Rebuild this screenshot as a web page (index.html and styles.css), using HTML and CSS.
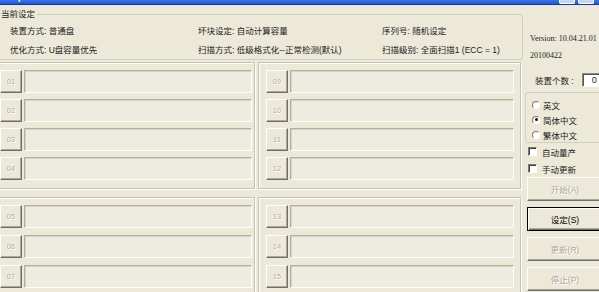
FILE: index.html
```html
<!DOCTYPE html>
<html>
<head>
    <meta charset="utf-8">
    <title>量产工具</title>
    <link rel="stylesheet" href="styles.css">
</head>
<body>
    <div class="titlebar">
        <span class="title">Chipsbank UMPTool</span>
        <span class="tb-btn"></span><span class="tb-btn"></span>
    </div>
    <div class="window">
        <div class="main">
            <fieldset class="current">
                <legend>当前设定</legend>
                <div class="info">
                    <span>装置方式: 普通盘</span>
                    <span>坏块设定: 自动计算容量</span>
                    <span>序列号: 随机设定</span>
                    <span>优化方式: U盘容量优先</span>
                    <span>扫描方式: 低级格式化--正常检测(默认)</span>
                    <span>扫描级别: 全面扫描1 (ECC = 1)</span>
                </div>
            </fieldset>
            <div class="frames">
                <div class="frame">
                    <div class="slot"><span class="port">01</span><span class="field"></span></div>
                    <div class="slot"><span class="port">02</span><span class="field"></span></div>
                    <div class="slot"><span class="port">03</span><span class="field"></span></div>
                    <div class="slot"><span class="port">04</span><span class="field"></span></div>
                </div>
                <div class="frame frame-r">
                    <div class="slot"><span class="port">09</span><span class="field"></span></div>
                    <div class="slot"><span class="port">10</span><span class="field"></span></div>
                    <div class="slot"><span class="port">11</span><span class="field"></span></div>
                    <div class="slot"><span class="port">12</span><span class="field"></span></div>
                </div>
                <div class="frame frame-low">
                    <div class="slot"><span class="port">05</span><span class="field"></span></div>
                    <div class="slot"><span class="port">06</span><span class="field"></span></div>
                    <div class="slot"><span class="port">07</span><span class="field"></span></div>
                </div>
                <div class="frame frame-r frame-low">
                    <div class="slot"><span class="port">13</span><span class="field"></span></div>
                    <div class="slot"><span class="port">14</span><span class="field"></span></div>
                    <div class="slot"><span class="port">15</span><span class="field"></span></div>
                </div>
            </div>
        </div>
        <div class="side">
            <div class="ver">Version: 10.04.21.01</div>
            <div class="date">20100422</div>
            <div class="count"><span>装置个数 :</span><span class="edit">0</span></div>
            <div class="lang">
                <div class="opt"><span class="radio"></span>英文</div>
                <div class="opt"><span class="radio on"></span>简体中文</div>
                <div class="opt"><span class="radio"></span>繁体中文</div>
            </div>
            <div class="chk"><span class="box"></span>自动量产</div>
            <div class="chk"><span class="box"></span>手动更新</div>
            <div class="btn off">开始(A)</div>
            <div class="btn def">设定(S)</div>
            <div class="btn off">更新(R)</div>
            <div class="btn off">停止(P)</div>
        </div>
    </div>
</body>
</html>
```

FILE: styles.css
```css
body {
    margin: 0;
    width: 599px;
    height: 292px;
    overflow: hidden;
    background: #ECE9D8;
    font-family: "Liberation Sans", "Noto Sans CJK SC", sans-serif;
    font-size: 8.5px;
    color: #1b1b1b;
}
.titlebar {
    box-sizing: border-box;
    height: 5px;
    display: flex;
    overflow: hidden;
    background: linear-gradient(#3a74ea, #1f57d6);
    border-bottom: 1px solid #0c3caa;
}
.title {
    flex: 1;
    color: #dfe8fb;
    font-weight: bold;
    font-size: 11px;
    line-height: 11px;
    margin-top: -9px;
}
.tb-btn {
    width: 14px;
    height: 3px;
    margin-right: 3px;
    border: 1px solid #fff;
    border-top: none;
    border-radius: 0 0 2px 2px;
    background: #c7d5f4;
}
.tb-btn:last-child {
    margin-right: 5px;
}
.window {
    display: flex;
}
.main {
    width: 531px;
    margin-left: -8px;
    flex-shrink: 0;
}
.current {
    margin: 3px 0 0 0;
    padding: 0 0 1px 17px;
    border: 1px solid #D0D0BF;
    border-radius: 3px;
    box-sizing: border-box;
    width: 531px;
}
.current legend {
    padding: 0 2px;
    margin-left: -11px;
    line-height: 12px;
}
.info {
    display: grid;
    grid-template-columns: 188px 184px auto;
    grid-auto-rows: 19px;
    align-items: center;
}
.frames {
    display: grid;
    grid-template-columns: 263px 263px;
    column-gap: 3px;
    row-gap: 8px;
    margin-top: 2px;
}
.frame {
    display: flex;
    flex-direction: column;
    gap: 6px;
    padding: 7px 2px 5px 7px;
    height: 113px;
    border: 1px solid #C6C3B3;
    box-shadow: inset 1px 1px 0 #fff, 1px 1px 0 #fff;
}
.frame-r {
    padding-right: 6px;
}
.frame-low {
    gap: 7px;
    height: 120px;
}
.slot {
    display: flex;
    gap: 2px;
    height: 23px;
}
.port {
    box-sizing: border-box;
    width: 22px;
    display: flex;
    align-items: center;
    justify-content: center;
    border: 1px solid;
    border-color: #fff #716F64 #716F64 #fff;
    box-shadow: inset -1px -1px 0 #ACA899;
    color: #B3B0A1;
    text-shadow: 1px 1px 0 #fff;
    font-size: 7.5px;
}
.field {
    flex: 1;
    border: 1px solid;
    border-color: #B2AF9F #fff #fff #B2AF9F;
    box-shadow: inset 1px 1px 0 #D6D3C4;
    background: #EEECE0;
}
.side {
    padding-left: 7px;
    display: flex;
    flex-direction: column;
    white-space: nowrap;
}
.ver, .date {
    font-family: "Liberation Serif", serif;
    font-size: 8px;
    line-height: 12px;
}
.ver {
    margin-top: 28px;
}
.date {
    margin-top: 5px;
}
.count {
    margin: 11px 0 0 5px;
    display: flex;
    align-items: center;
    height: 14px;
}
.edit {
    box-sizing: border-box;
    margin-left: 8px;
    width: 30px;
    height: 14px;
    line-height: 12px;
    padding-left: 9px;
    border: 1px solid;
    border-color: #8E8B7E #fff #fff #8E8B7E;
    box-shadow: inset 1px 1px 0 #555;
    background: #fff;
    font-size: 9px;
}
.lang {
    margin: 5px 0 0 -5px;
    width: 80px;
    height: 51px;
    box-sizing: border-box;
    padding: 4px 0 0 6px;
    border: 1px solid #D0D0BF;
    border-radius: 3px;
}
.opt {
    display: flex;
    align-items: center;
    gap: 3px;
    height: 15px;
}
.radio {
    box-sizing: border-box;
    width: 8px;
    height: 8px;
    border-radius: 50%;
    border: 1px solid;
    border-color: #7D7A6D #fff #fff #7D7A6D;
    background: #fff;
    display: flex;
    align-items: center;
    justify-content: center;
}
.radio.on::after {
    content: "";
    width: 3px;
    height: 3px;
    border-radius: 50%;
    background: #111;
}
.chk {
    margin-left: -2px;
    display: flex;
    align-items: center;
    gap: 5px;
    height: 17px;
}
.chk:first-of-type {
    margin-top: 1px;
}
.box {
    box-sizing: border-box;
    width: 9px;
    height: 9px;
    border: 1px solid;
    border-color: #7D7A6D #fff #fff #7D7A6D;
    box-shadow: inset 1px 1px 0 #404040;
    background: #fff;
}
.btn {
    box-sizing: border-box;
    margin: 6px 0 0 -3px;
    width: 76px;
    height: 24px;
    display: flex;
    align-items: center;
    justify-content: center;
    border: 1px solid;
    border-color: #fff #716F64 #716F64 #fff;
    box-shadow: inset -1px -1px 0 #ACA899;
}
.chk + .btn {
    margin-top: 0;
}
.off {
    color: #ACA899;
    text-shadow: 1px 1px 0 #fff;
}
.def {
    border-color: #000;
    box-shadow: inset 1px 1px 0 #fff, inset -1px -1px 0 #716F64, inset -2px -2px 0 #ACA899;
    color: #000;
}
```
